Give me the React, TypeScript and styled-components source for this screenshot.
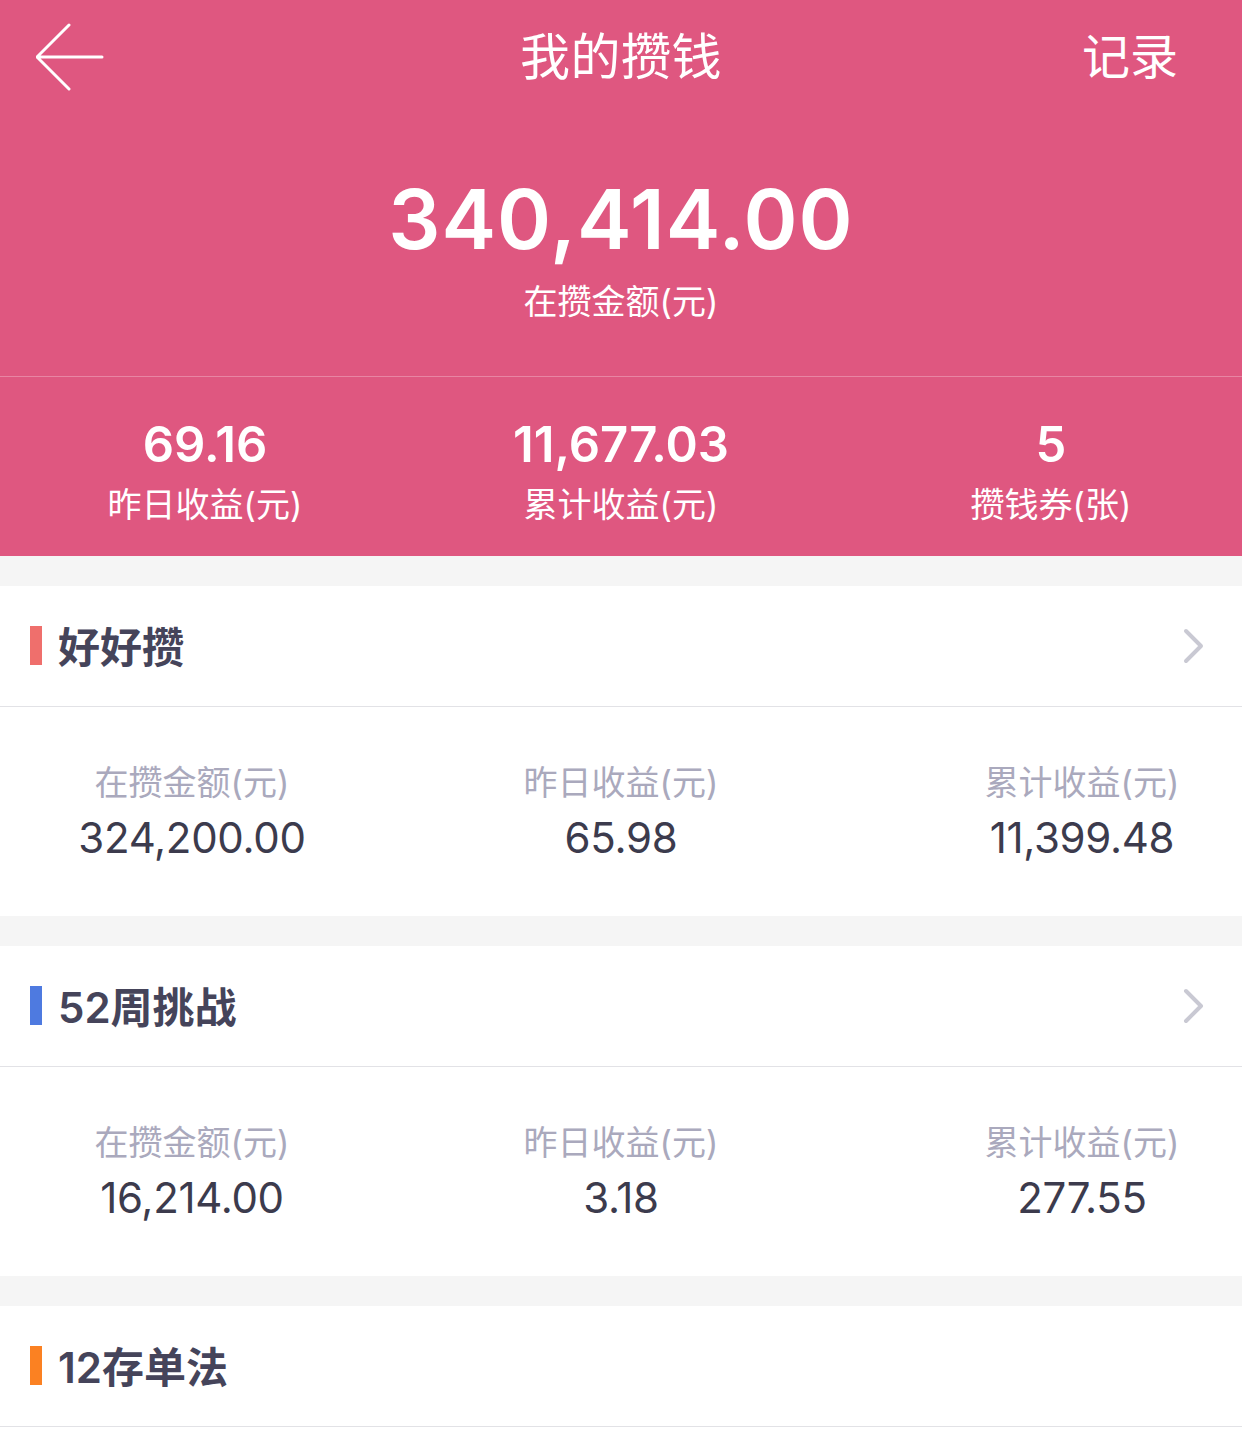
import React from "react";
import styled, { createGlobalStyle } from "styled-components";

const GlobalStyle = createGlobalStyle`
  html, body { margin: 0; padding: 0; background: #ffffff; }
  body { font-family: "Inter", "Noto Sans CJK SC", sans-serif; -webkit-font-smoothing: antialiased; }
  * { box-sizing: border-box; }
`;

const Page = styled.div`
  width: 1242px;
  min-height: 1436px;
  background: #ffffff;
`;

const Hero = styled.header`
  background: #df5780;
  color: #ffffff;
`;

const NavBar = styled.div`
  height: 115px;
  display: grid;
  grid-template-columns: 240px 1fr 240px;
  align-items: center;
  padding: 0 36px 10px 36px;
`;

const BackButton = styled.button`
  width: 68px;
  height: 68px;
  padding: 0;
  border: 0;
  background: none;
  display: flex;
  align-items: center;
  margin-top: 8px;
`;

const NavTitle = styled.h1`
  margin: 0;
  text-align: center;
  font-size: 50px;
  font-weight: 400;
  letter-spacing: 0.5px;
`;

const NavAction = styled.div`
  text-align: right;
  font-size: 48px;
  font-weight: 400;
  padding-right: 28px;
`;

const Amount = styled.section`
  height: 262px;
  display: flex;
  flex-direction: column;
  align-items: center;
  padding-top: 55px;
  border-bottom: 1px solid rgba(255, 255, 255, 0.28);
`;

const BigNumber = styled.div`
  font-size: 82px;
  line-height: 100px;
  font-weight: 600;
  letter-spacing: 1px;
`;

const HeroLabel = styled.div`
  font-size: 34px;
  line-height: 40px;
  margin-top: 12px;
`;

const StatsRow = styled.div`
  height: 179px;
  display: grid;
  grid-template-columns: repeat(3, 1fr);
  padding-top: 38px;
  & > :nth-child(1) { padding-right: 4px; }
  & > :nth-child(3) { padding-left: 32px; }
`;

const Stat = styled.div`
  display: flex;
  flex-direction: column;
  align-items: center;
`;

const StatValue = styled.div`
  font-size: 49px;
  line-height: 60px;
  font-weight: 600;
`;

const StatLabel = styled.div`
  font-size: 34px;
  line-height: 40px;
  margin-top: 10px;
`;

const Gap = styled.div`
  height: 30px;
  background: #f5f5f5;
`;

const CardHeader = styled.div`
  height: 121px;
  display: flex;
  align-items: center;
  padding: 0 36px 0 30px;
  border-bottom: 1px solid #e2e2e6;
`;

const Accent = styled.span<{ $color: string }>`
  width: 12px;
  height: 39px;
  background: ${(p) => p.$color};
  margin-right: 16px;
  margin-top: -2px;
  flex-shrink: 0;
`;

const CardTitle = styled.h2`
  flex: 1;
  margin: 0 0 4px;
  font-size: 42px;
  font-weight: 600;
  color: #45445a;
`;

const CardBody = styled.div`
  height: 209px;
  display: grid;
  grid-template-columns: repeat(3, 1fr);
  align-content: center;
  padding-top: 4px;
  & > :nth-child(1) { padding-right: 30px; }
  & > :nth-child(3) { padding-left: 94px; }
`;

const Metric = styled.div`
  display: flex;
  flex-direction: column;
  align-items: center;
`;

const MetricLabel = styled.div`
  font-size: 34px;
  line-height: 40px;
  color: #aaa9bd;
`;

const MetricValue = styled.div`
  font-size: 42px;
  line-height: 54px;
  margin-top: 8px;
  letter-spacing: -0.3px;
  color: #3c3b4d;
`;

const Arrow = () => (
  <svg width="68" height="68" viewBox="0 0 68 68" fill="none">
    <path d="M33 2 L1 34 L33 66 M1 34 H66" stroke="#ffffff" strokeWidth="3" strokeLinecap="round" strokeLinejoin="round" />
  </svg>
);

const Chevron = () => (
  <svg width="24" height="36" viewBox="0 0 24 36" fill="none">
    <path d="M4 3 L19 18 L4 33" stroke="#c9c9d3" strokeWidth="4" strokeLinecap="round" strokeLinejoin="round" />
  </svg>
);

type Plan = {
  title: string;
  color: string;
  values?: [string, string, string];
};

const plans: Plan[] = [
  { title: "好好攒", color: "#ef6f6c", values: ["324,200.00", "65.98", "11,399.48"] },
  { title: "52周挑战", color: "#4e7ae0", values: ["16,214.00", "3.18", "277.55"] },
  { title: "12存单法", color: "#fb8122" },
];

const metricLabels = ["在攒金额(元)", "昨日收益(元)", "累计收益(元)"];

export default function App() {
  return (
    <Page>
      <GlobalStyle />
      <Hero>
        <NavBar>
          <BackButton aria-label="返回">
            <Arrow />
          </BackButton>
          <NavTitle>我的攒钱</NavTitle>
          <NavAction>记录</NavAction>
        </NavBar>
        <Amount>
          <BigNumber>340,414.00</BigNumber>
          <HeroLabel>在攒金额(元)</HeroLabel>
        </Amount>
        <StatsRow>
          <Stat>
            <StatValue>69.16</StatValue>
            <StatLabel>昨日收益(元)</StatLabel>
          </Stat>
          <Stat>
            <StatValue>11,677.03</StatValue>
            <StatLabel>累计收益(元)</StatLabel>
          </Stat>
          <Stat>
            <StatValue>5</StatValue>
            <StatLabel>攒钱券(张)</StatLabel>
          </Stat>
        </StatsRow>
      </Hero>
      {plans.map((plan) => (
        <React.Fragment key={plan.title}>
          <Gap />
          <CardHeader>
            <Accent $color={plan.color} />
            <CardTitle>{plan.title}</CardTitle>
            {plan.values && <Chevron />}
          </CardHeader>
          {plan.values && (
            <CardBody>
              {plan.values.map((v, i) => (
                <Metric key={i}>
                  <MetricLabel>{metricLabels[i]}</MetricLabel>
                  <MetricValue>{v}</MetricValue>
                </Metric>
              ))}
            </CardBody>
          )}
        </React.Fragment>
      ))}
    </Page>
  );
}
